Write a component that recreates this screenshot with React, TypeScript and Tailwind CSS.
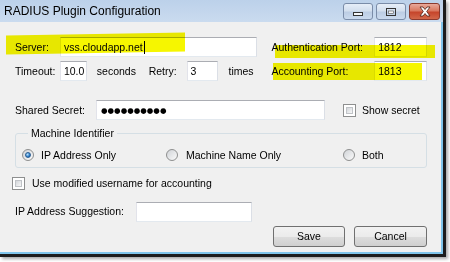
import React from 'react';

const font = { fontFamily: '"Liberation Sans", Arial, sans-serif' };

function TextBox({ className = '', children }: { className?: string; children?: React.ReactNode }) {
  return (
    <div
      className={`h-[20px] bg-white border border-[#abadb3] border-l-[#e2e3ea] border-r-[#dbdfe6] border-b-[#e3e9ef] flex items-center pl-[3px] ${className}`}
    >
      {children}
    </div>
  );
}

function CheckBox() {
  return (
    <span className="w-[13px] h-[13px] border border-[#8e8f8f] bg-white p-[2px] shrink-0">
      <span className="block w-full h-full bg-gradient-to-br from-[#d3d6da] to-[#f7f7f7] border border-[#c0c3c7]" />
    </span>
  );
}

function Radio({ checked = false }: { checked?: boolean }) {
  return (
    <span className="w-[12px] h-[12px] rounded-full border border-[#8e8f8f] bg-gradient-to-br from-[#d0d3d7] to-[#fbfbfb] flex items-center justify-center shrink-0">
      {checked && (
        <span className="w-[6px] h-[6px] rounded-full bg-[radial-gradient(circle_at_35%_35%,#b8e3ff,#1c6fc0_70%)] border border-[#2a5d92]" />
      )}
    </span>
  );
}

function Button({ label, className = '' }: { label: string; className?: string }) {
  return (
    <div
      className={`h-[21px] rounded-[3px] border border-[#707070] bg-[linear-gradient(#f2f2f2_0%,#ebebeb_50%,#dddddd_51%,#cfcfcf_100%)] flex items-center justify-center ${className}`}
    >
      {label}
    </div>
  );
}

function CaptionButton({ kind }: { kind: 'min' | 'max' | 'close' }) {
  const red = kind === 'close';
  return (
    <div
      className={`h-[17px] rounded-[3px] border flex items-center justify-center ${
        red
          ? 'w-[31px] border-[#8b3a2e] bg-[linear-gradient(#e9a99b_0%,#d9785f_45%,#c6452b_55%,#d2674a_100%)]'
          : 'w-[30px] border-[#7a8ca8] bg-[linear-gradient(#e6eef8_0%,#d3dfee_45%,#bccde4_55%,#cadaee_100%)]'
      }`}
    >
      {kind === 'min' && (
        <svg width="12" height="10" viewBox="0 0 12 10">
          <rect x="1.5" y="5.5" width="9" height="3" fill="#f4f6f9" stroke="#333" />
        </svg>
      )}
      {kind === 'max' && (
        <svg width="12" height="10" viewBox="0 0 12 10">
          <rect x="1.5" y="1.5" width="9" height="7" fill="none" stroke="#333" />
          <rect x="3.5" y="4" width="5" height="2.5" fill="#f4f6f9" stroke="#555" strokeWidth="0.6" />
        </svg>
      )}
      {kind === 'close' && (
        <svg width="14" height="11" viewBox="0 0 14 11">
          <path d="M2 1 L5 1 L7 3.5 L9 1 L12 1 L8.7 5.5 L12 10 L9 10 L7 7.5 L5 10 L2 10 L5.3 5.5 Z" fill="#fff" stroke="#4a1e16" strokeWidth="0.8" />
        </svg>
      )}
    </div>
  );
}

export default function App() {
  return (
    <div className="w-[450px] h-[262px] bg-white overflow-hidden relative text-black" style={font}>
      <div className="w-[446px] h-[257px] flex flex-col border-r-[3px] border-b-[3px] border-[#1c1c1c] shadow-[2px_2px_3px_rgba(0,0,0,0.35)]">
        {/* title bar */}
        <div className="h-[22px] shrink-0 bg-gradient-to-b from-[#bcd1ea] to-[#cadbef] flex items-start justify-between pl-[4px] pr-[3px]">
          <span className="mt-[3px] text-[12px] leading-[16px] text-black">
            RADIUS Plugin Configuration
          </span>
          <div className="flex gap-[3px] mt-[3px]">
            <CaptionButton kind="min" />
            <CaptionButton kind="max" />
            <CaptionButton kind="close" />
          </div>
        </div>

        {/* dialog body */}
        <div className="flex-1 bg-[#f0f0f0] border-r-2 border-b-2 border-[#7fc4ea] pl-[15px] pr-[14px] text-[10.5px] leading-[13px]">
          {/* server / auth port */}
          <div className="flex items-center h-[20px] mt-[15px]">
            <span className="w-[45px]">Server:</span>
            <TextBox className="w-[198px]">
              vss.cloudapp.net<span className="w-px h-[13px] bg-black ml-[1px]" />
            </TextBox>
            <span className="w-[103px] ml-[14px]">Authentication Port:</span>
            <TextBox className="w-[53px]">1812</TextBox>
          </div>

          {/* timeout / retry / accounting port */}
          <div className="flex items-center h-[20px] mt-[4px]">
            <span className="w-[45px]">Timeout:</span>
            <TextBox className="w-[27px] pl-[2px]">10.0</TextBox>
            <span className="w-[52px] ml-[10px]">seconds</span>
            <span className="w-[38px]">Retry:</span>
            <TextBox className="w-[31px]">3</TextBox>
            <span className="w-[43px] ml-[11px]">times</span>
            <span className="w-[103px]">Accounting Port:</span>
            <TextBox className="w-[53px]">1813</TextBox>
          </div>

          {/* shared secret */}
          <div className="flex items-center h-[20px] mt-[19px]">
            <span className="w-[81px]">Shared Secret:</span>
            <TextBox className="w-[229px] pl-[4px]">
              <span className="text-[7.5px]" style={{ fontFamily: '"DejaVu Sans", sans-serif' }}>
                ●●●●●●●●●●
              </span>
            </TextBox>
            <span className="ml-[18px] flex items-center gap-[6px]">
              <CheckBox />
              Show secret
            </span>
          </div>

          {/* machine identifier */}
          <fieldset className="mt-[7px] w-[412px] border border-[#d5dfe5] rounded-[3px] pl-[6px] pt-[8px] pb-[5px]">
            <legend className="ml-[6px] px-[3px] leading-[13px]">Machine Identifier</legend>
            <div className="flex items-center h-[14px]">
              <span className="w-[144px] flex items-center gap-[7px]">
                <Radio checked />
                IP Address Only
              </span>
              <span className="w-[177px] flex items-center gap-[8px]">
                <Radio />
                Machine Name Only
              </span>
              <span className="flex items-center gap-[7px]">
                <Radio />
                Both
              </span>
            </div>
          </fieldset>

          {/* modified username */}
          <div className="flex items-center h-[13px] mt-[9px] -ml-[3px] gap-[7px]">
            <CheckBox />
            Use modified username for accounting
          </div>

          {/* ip suggestion */}
          <div className="flex items-center h-[19px] mt-[12px]">
            <span className="w-[121px]">IP Address Suggestion:</span>
            <TextBox className="w-[116px] h-[19px]" />
          </div>

          {/* buttons */}
          <div className="flex justify-end gap-[9px] mt-[5px]">
            <Button label="Save" className="w-[72px]" />
            <Button label="Cancel" className="w-[73px]" />
          </div>
        </div>
      </div>

      {/* highlighter marks */}
      <div className="absolute left-[6px] top-[34px] w-[179px] h-[19px] bg-[#f6f600] mix-blend-multiply -skew-y-1" />
      <div className="absolute left-[275px] top-[45px] w-[160px] h-[13px] bg-[#f6f600] mix-blend-multiply" />
      <div className="absolute left-[273px] top-[63px] w-[149px] h-[17px] bg-[#f6f600] mix-blend-multiply" />
    </div>
  );
}
